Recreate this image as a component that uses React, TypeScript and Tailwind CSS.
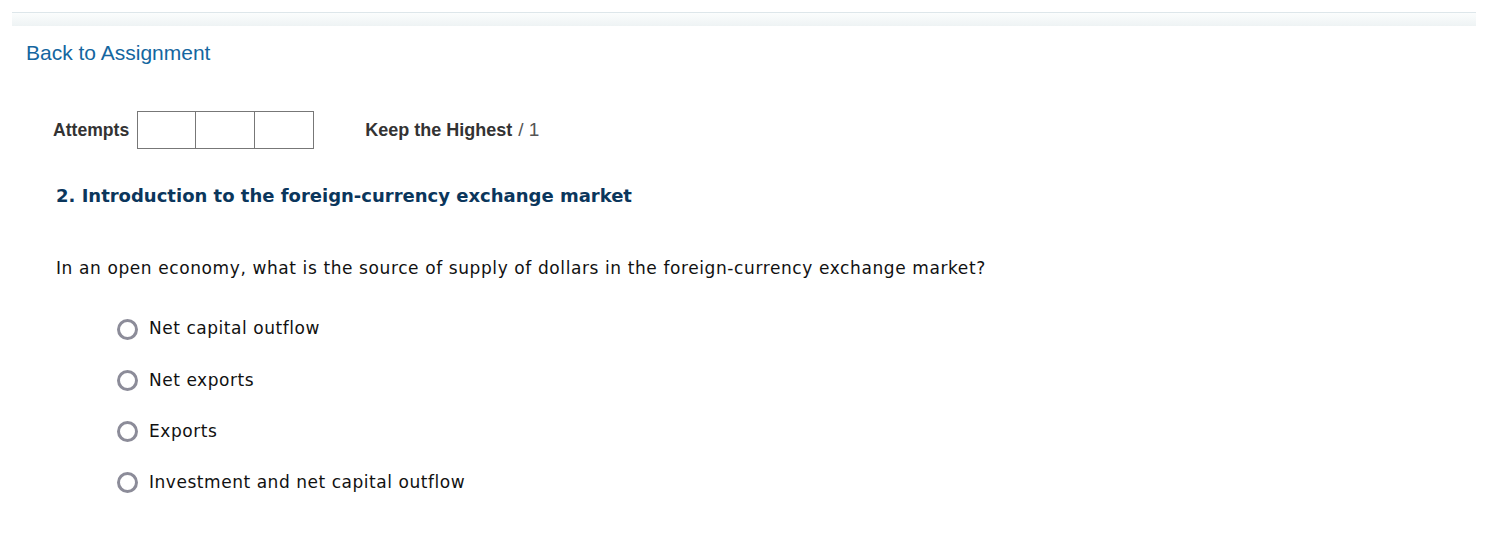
import React from "react";

const options = [
  "Net capital outflow",
  "Net exports",
  "Exports",
  "Investment and net capital outflow",
];

export default function App() {
  return (
    <div className="min-h-[544px] bg-white pt-3">
      <div className="mx-3 h-[14px] border-t border-[#dde6ea] bg-gradient-to-b from-[#fbfdfd] to-[#eef3f4]" />

      <div className="pl-[26px] pt-[13px]">
        <a
          href="#"
          className="text-[21px] leading-[28px] text-[#1466a0] font-['Liberation_Sans',Arial,sans-serif]"
        >
          Back to Assignment
        </a>
      </div>

      <div className="flex items-center pl-[53px] mt-[44px] font-['Liberation_Sans',Arial,sans-serif]">
        <span className="text-[17.6px] font-bold text-[#333333] mr-[8px]">Attempts</span>
        <div className="flex">
          <div className="w-[59px] h-[38px] border border-[#777777]" />
          <div className="w-[59px] h-[38px] border border-l-0 border-[#777777]" />
          <div className="w-[59px] h-[38px] border border-l-0 border-[#777777]" />
        </div>
        <span className="ml-[51px] text-[18px] font-bold text-[#333333]">Keep the Highest</span>
        <span className="ml-[6px] text-[19px] text-[#555555]">/ 1</span>
      </div>

      <h2 className="pl-[56px] mt-[35px] text-[18px] leading-[24px] font-bold text-[#0b365c] font-['DejaVu_Sans',Verdana,sans-serif]">
        2. Introduction to the foreign-currency exchange market
      </h2>

      <p className="pl-[56px] mt-[48px] text-[17px] leading-[24px] tracking-[0.6px] text-[#111111] font-['DejaVu_Sans',Verdana,sans-serif]">
        In an open economy, what is the source of supply of dollars in the foreign-currency exchange market?
      </p>

      <div className="pl-[117px] mt-[37px] flex flex-col gap-[27.3px] font-['DejaVu_Sans',Verdana,sans-serif]">
        {options.map((o) => (
          <label key={o} className="flex items-center h-[24px]">
            <span className="w-[21px] h-[21px] rounded-full border-[3px] border-[#8c8c99] bg-white" />
            <span className="ml-[11px] text-[17px] tracking-[0.54px] text-[#111111]">{o}</span>
          </label>
        ))}
      </div>
    </div>
  );
}
